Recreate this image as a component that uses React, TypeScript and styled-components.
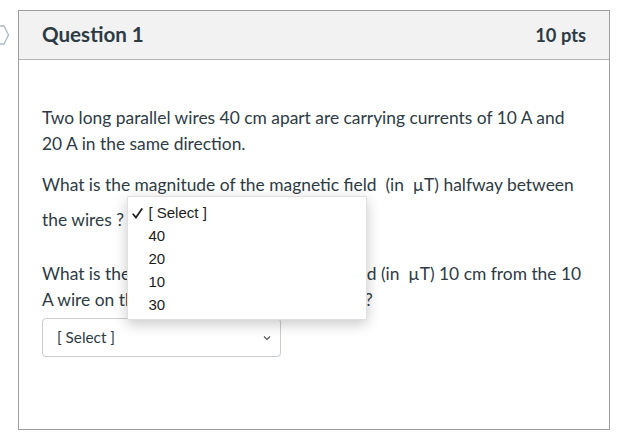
import React from "react";
import styled, { createGlobalStyle } from "styled-components";

const Global = createGlobalStyle`
  html, body { margin: 0; padding: 0; background: #ffffff; }
  body { font-family: Lato, "Open Sans", sans-serif; color: #2d3b45; }
`;

const Page = styled.div`
  display: flex;
  align-items: flex-start;
  padding-top: 10px;
  width: 623px;
  height: 438px;
  box-sizing: border-box;
  overflow: hidden;
`;

const Marker = styled.svg`
  flex: 0 0 18px;
  width: 18px;
  height: 20px;
  margin-top: 15px;
`;

const Card = styled.section`
  width: 592px;
  height: 420px;
  box-sizing: border-box;
  border: 1px solid #9e9e9e;
  display: flex;
  flex-direction: column;
`;

const Header = styled.header`
  height: 49px;
  box-sizing: border-box;
  background: #f2f2f2;
  border-bottom: 1px solid #b4b4b4;
  display: flex;
  align-items: center;
  justify-content: space-between;
  padding: 0 23px 0 23px;
`;

const Title = styled.h2`
  margin: 0 0 3px 0;
  font-family: Lato, sans-serif;
  font-weight: 700;
  font-size: 20.6px;
  color: #2d3b45;
`;

const Points = styled.div`
  font-family: Lato, sans-serif;
  font-weight: 700;
  font-size: 18.3px;
  color: #2d3b45;
`;

const Body = styled.div`
  padding: 45px 23px 0 23px;
`;

const Para = styled.p`
  margin: 0 0 15px 0;
  font-size: 17.4px;
  line-height: 26px;
`;

const SelectWrap = styled.span`
  position: relative;
  display: inline-block;
  vertical-align: middle;
  margin: 5px 0 4px 0;
`;

const SelectBox = styled.span`
  display: inline-flex;
  align-items: center;
  justify-content: space-between;
  box-sizing: border-box;
  width: 239px;
  height: 39px;
  padding: 0 9px 0 14px;
  border: 1px solid #c7cdd1;
  border-radius: 4px;
  background: #fff;
  font-family: Lato, sans-serif;
  font-size: 15.3px;
  color: #2d3b45;
  line-height: 1;
`;

const Chevron = styled.svg`
  width: 8px;
  height: 6px;
`;

const Menu = styled.ul`
  position: absolute;
  left: -1px;
  top: -7px;
  width: 240px;
  margin: 0;
  padding: 5px 0 3px 0;
  list-style: none;
  background: #ffffff;
  border: 1px solid rgba(0, 0, 0, 0.12);
  border-radius: 2px;
  box-shadow: 0 4px 14px rgba(0, 0, 0, 0.22);
  z-index: 5;
  box-sizing: border-box;
`;

const Item = styled.li`
  display: flex;
  align-items: center;
  height: 22.8px;
  padding-left: 4px;
  font-family: "Liberation Sans", Arial, sans-serif;
  font-size: 15px;
  color: #1c1c1c;
`;

const CheckSlot = styled.span`
  display: inline-flex;
  align-items: center;
  width: 16px;
  height: 12px;
`;

const CheckIcon = styled.svg`
  width: 11px;
  height: 11px;
`;

const options = ["40", "20", "10", "30"];

function Select({ open }: { open?: boolean }) {
  return (
    <SelectWrap>
      <SelectBox>
        <span>[ Select ]</span>
        <Chevron viewBox="0 0 8 6">
          <path d="M1 1.5 L4 4.5 L7 1.5" fill="none" stroke="#555" strokeWidth="1.2" />
        </Chevron>
      </SelectBox>
      {open && (
        <Menu>
          <Item>
            <CheckSlot>
              <CheckIcon viewBox="0 0 11 11">
                <path d="M1.2 6.2 L4 9.6 L9.8 1" fill="none" stroke="#1c1c1c" strokeWidth="1.7" strokeLinecap="round" strokeLinejoin="round" />
              </CheckIcon>
            </CheckSlot>
            [ Select ]
          </Item>
          {options.map((o) => (
            <Item key={o}>
              <CheckSlot />
              {o}
            </Item>
          ))}
        </Menu>
      )}
    </SelectWrap>
  );
}

export default function App() {
  return (
    <>
      <Global />
      <Page>
        <Marker viewBox="0 0 18 20">
          <path d="M-6 1 H4 L8.5 10 L4 19 H-6 Z" fill="none" stroke="#a9b8c8" strokeWidth="1.3" />
        </Marker>
        <Card>
          <Header>
            <Title>Question 1</Title>
            <Points>10 pts</Points>
          </Header>
          <Body>
            <Para>
              Two long parallel wires 40 cm apart are carrying currents of 10 A and 20 A in the same direction.
            </Para>
            <Para>
              What is the magnitude of the magnetic field&nbsp; (in&nbsp; µT) halfway between the wires ? <Select open />
            </Para>
            <Para>
              What is the magnitude of the magnetic field (in&nbsp; µT) 10 cm from the 10 A wire on the side opposite the 20 A wire&nbsp; ?
              <br />
              <Select />
            </Para>
          </Body>
        </Card>
      </Page>
    </>
  );
}
